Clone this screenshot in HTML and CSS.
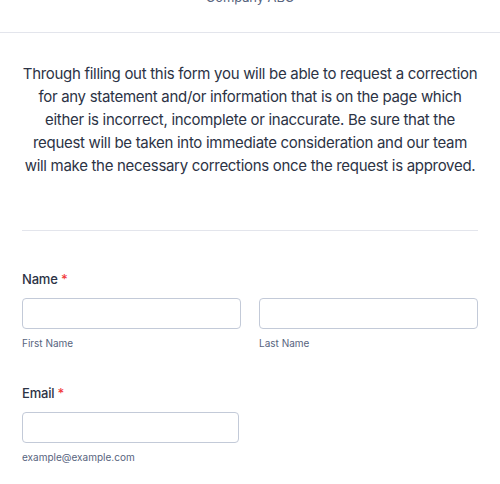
FILE: index.html
```html
<!DOCTYPE html>
<html>
<head>
<meta charset="utf-8">
<link rel="stylesheet" href="styles.css">
</head>
<body>
<header class="header">
  <div class="company">Company ABC</div>
</header>
<main class="form">
  <section class="intro">
    <p class="intro-text">Through filling out this form you will be able to request a correction for any statement and/or information that is on the page which either is incorrect, incomplete or inaccurate. Be sure that the request will be taken into immediate consideration and our team will make the necessary corrections once the request is approved.</p>
  </section>
  <section class="field">
    <label class="label">Name <span class="req">*</span></label>
    <div class="row">
      <div class="col">
        <input class="input" type="text">
        <div class="sub">First Name</div>
      </div>
      <div class="col">
        <input class="input" type="text">
        <div class="sub">Last Name</div>
      </div>
    </div>
  </section>
  <section class="field field-email">
    <label class="label">Email <span class="req">*</span></label>
    <div class="col col-email">
      <input class="input" type="email">
      <div class="sub">example@example.com</div>
    </div>
  </section>
</main>
</body>
</html>
```
FILE: styles.css
```css
* { box-sizing: border-box; }
html, body { margin: 0; padding: 0; background: #fff; }
body {
  font-family: Inter, "Noto Sans", sans-serif;
  color: #2c3345;
  width: 500px;
  overflow: hidden;
}
.header {
  margin-top: -11px;
  padding-bottom: 27px;
  border-bottom: 1px solid #e3e5ec;
  text-align: center;
}
.company {
  font-size: 13px;
  line-height: 16px;
  color: #57647e;
  letter-spacing: -0.1px;
}
.form {
  padding: 0 22px;
}
.intro {
  padding-top: 29px;
  padding-bottom: 53px;
  border-bottom: 1px solid #e3e5ec;
}
.intro-text {
  margin: 0;
  font-size: 15px;
  line-height: 23px;
  letter-spacing: -0.3px;
  text-align: center;
  color: #2c3345;
}
.field {
  padding-top: 40px;
}
.field-email {
  padding-top: 35px;
}
.label {
  display: block;
  font-size: 13px;
  line-height: 16px;
  font-weight: 500;
  letter-spacing: -0.2px;
  color: #2c3345;
  margin-bottom: 11px;
}
.req { color: #f23a3c; }
.row {
  display: flex;
  gap: 18px;
}
.col { flex: 1; }
.col-email { width: 217px; }
.input {
  display: block;
  width: 100%;
  height: 31px;
  margin: 0;
  border: 1px solid #c3cad8;
  border-radius: 4px;
  background: #fff;
  font-family: inherit;
}
.sub {
  margin-top: 8px;
  font-size: 10px;
  line-height: 13px;
  color: #57647e;
}
```
